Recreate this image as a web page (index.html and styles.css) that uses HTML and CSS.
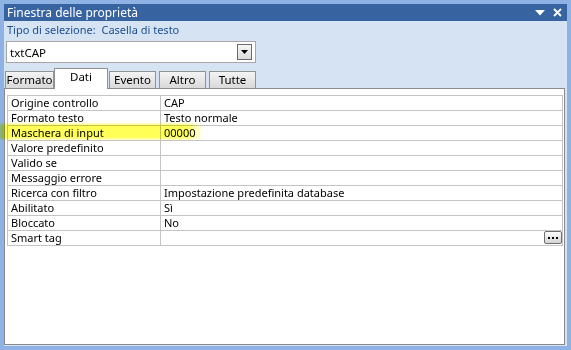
FILE: index.html
```html
<!DOCTYPE html>
<html lang="it">
<head>
    <meta charset="UTF-8">
    <title>Finestra delle proprietà</title>
    <link rel="stylesheet" href="styles.css">
</head>
<body>
    <div class="frame">
        <div class="window">
            <div class="titlebar">
                <span class="title">Finestra delle proprietà</span>
                <div class="title-icons">
                    <svg width="10" height="6" viewBox="0 0 10 6"><path d="M0 0H10L5 5.5Z" fill="#fff"/></svg>
                    <svg width="9" height="9" viewBox="0 0 9 9"><path d="M1 1L8 8M8 1L1 8" stroke="#fff" stroke-width="1.8"/></svg>
                </div>
            </div>

            <div class="body">
                <div class="sel-info">Tipo di selezione:&nbsp; Casella di testo</div>

                <div class="combo">
                    <span class="combo-text">txtCAP</span>
                    <span class="combo-btn">
                        <svg width="7" height="4" viewBox="0 0 7 4"><path d="M0 0H7L3.5 4Z" fill="#000"/></svg>
                    </span>
                </div>

                <div class="tabs">
                    <div class="tab">Formato</div>
                    <div class="tab tab-active">Dati</div>
                    <div class="tab">Evento</div>
                    <div class="tab">Altro</div>
                    <div class="tab">Tutte</div>
                </div>

                <div class="panel">
                    <table class="props">
                        <tr><td class="name">Origine controllo</td><td>CAP</td></tr>
                        <tr><td class="name">Formato testo</td><td>Testo normale</td></tr>
                        <tr><td class="name">Maschera di input</td><td>00000</td></tr>
                        <tr><td class="name">Valore predefinito</td><td></td></tr>
                        <tr><td class="name">Valido se</td><td></td></tr>
                        <tr><td class="name">Messaggio errore</td><td></td></tr>
                        <tr><td class="name">Ricerca con filtro</td><td>Impostazione predefinita database</td></tr>
                        <tr><td class="name">Abilitato</td><td>Sì</td></tr>
                        <tr><td class="name">Bloccato</td><td>No</td></tr>
                        <tr>
                            <td class="name">Smart tag</td>
                            <td class="with-btn">
                                <span class="dots-btn">
                                    <svg width="10" height="3" viewBox="0 0 10 3"><path d="M0 0h2v2H0zM4 0h2v2H4zM8 0h2v2H8z" fill="#000"/></svg>
                                </span>
                            </td>
                        </tr>
                    </table>
                </div>
            </div>
        </div>

        <div class="highlight"></div>
    </div>
</body>
</html>
```

FILE: styles.css
```css
:root {
    --frame-color: #8db2e3;
    --title-color: #3764a0;
    --body-color: #d5e3f2;
    --label-color: #1e4f91;
    --grid-color: #c4c4c4;
    --border-color: #8a8a8a;
}

html, body {
    margin: 0;
    padding: 0;
}

body {
    font-family: "Noto Sans", "Open Sans", sans-serif;
    font-size: 11px;
    color: #000;
    background-color: var(--frame-color);
}

.frame {
    position: relative;
    width: 571px;
    height: 350px;
    box-sizing: border-box;
    padding: 4px;
    background-color: var(--frame-color);
}

.window {
    height: 342px;
    display: flex;
    flex-direction: column;
}

.titlebar {
    height: 17px;
    background-color: var(--title-color);
    color: #fff;
    display: flex;
    align-items: center;
    justify-content: space-between;
    padding: 0 5px 0 3px;
}

.title {
    font-size: 12px;
    line-height: 17px;
}

.title-icons {
    display: flex;
    align-items: center;
    gap: 8px;
}

.body {
    flex: 1;
    background-color: var(--body-color);
    display: flex;
    flex-direction: column;
    padding: 0 2px 1px 0;
}

.sel-info {
    height: 19px;
    line-height: 18px;
    padding-left: 3px;
    color: var(--label-color);
}

.combo {
    margin: 1px 0 0 2px;
    width: 250px;
    height: 22px;
    box-sizing: border-box;
    background-color: #fff;
    border: 1px solid #a6a6a6;
    display: flex;
    align-items: center;
    justify-content: space-between;
    padding: 0 3px;
    font-size: 11.5px;
}

.combo-btn {
    width: 15px;
    height: 16px;
    box-sizing: border-box;
    border: 1px solid #6b6b6b;
    background: linear-gradient(#f6f6f6, #dcdcdc);
    display: flex;
    align-items: center;
    justify-content: center;
}

.tabs {
    display: flex;
    align-items: flex-end;
    margin: 5px 0 0 1px;
    height: 20px;
    position: relative;
    z-index: 1;
}

.tab {
    height: 17px;
    box-sizing: border-box;
    border: 1px solid #929292;
    border-bottom: none;
    background: linear-gradient(#f4f4f4, #d9d9d9);
    line-height: 16px;
    text-align: center;
    margin-right: 3px;
    width: 47px;
    font-size: 11.5px;
}

.tab:first-child {
    width: 49px;
    margin-right: 0;
}

.tab-active {
    height: 21px;
    width: 54px;
    background: #fff;
    line-height: 15px;
    margin-right: 1px;
    margin-bottom: -1px;
    padding-bottom: 4px;
}

.panel {
    flex: 1;
    background-color: #fff;
    border: 1px solid var(--border-color);
    padding: 6px 2px 0 2px;
}

.props {
    width: 556px;
    border-collapse: collapse;
}

.props td {
    height: 14px;
    padding: 0 0 0 3px;
    border: 1px solid var(--grid-color);
    line-height: 14px;
    white-space: nowrap;
}

.props td.name {
    width: 149px;
}

.props td.with-btn {
    text-align: right;
    padding-right: 0;
}

.dots-btn {
    display: inline-flex;
    align-items: flex-end;
    justify-content: center;
    width: 18px;
    height: 13px;
    box-sizing: border-box;
    border: 1px solid #6f6f6f;
    border-radius: 2px;
    background: linear-gradient(#fbfbfb, #d4d4d4);
    padding-bottom: 3px;
    vertical-align: top;
}

.highlight {
    position: absolute;
    left: 0;
    top: 124px;
    width: 203px;
    height: 15px;
    background: linear-gradient(to right, rgba(255, 255, 70, 0.9) 92%, rgba(255, 255, 70, 0));
    mix-blend-mode: multiply;
    filter: blur(1px);
    pointer-events: none;
}
```
